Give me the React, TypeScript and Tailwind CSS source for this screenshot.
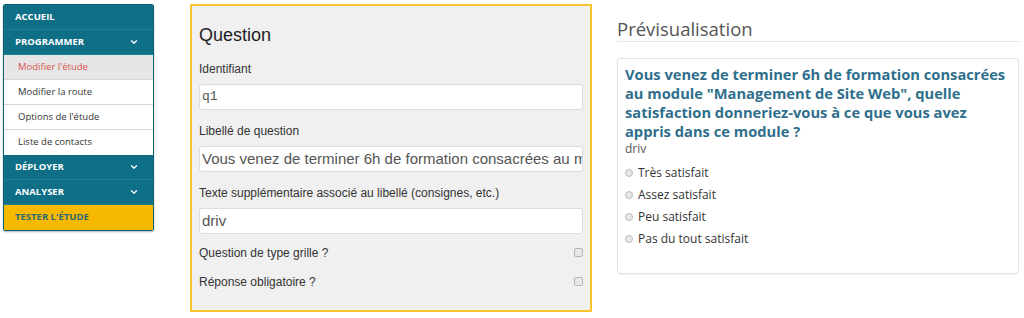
import { ChevronDown } from "lucide-react";

const menuHead = "flex items-center justify-between h-[25px] pl-[11px] pr-[14px] bg-[#0e6f87] text-white text-[9.5px] font-bold uppercase border-b border-[#1d7f96]";
const subItem = "flex items-center h-[25px] pl-[14px] text-[9.5px] text-[#333] bg-white border-b border-[#d6d6d6]";

function Sidebar() {
    return (
        <div className="w-[151px] mt-[4px] ml-[3px] border border-[#0c5f74] rounded-[2px] overflow-hidden shadow-[0_1px_2px_rgba(0,0,0,0.3)] self-start" style={{ fontFamily: '"Open Sans", sans-serif' }}>
            <div className={menuHead}>Accueil</div>
            <div className={menuHead}>
                Programmer
                <ChevronDown size={10} strokeWidth={3} />
            </div>
            <div className={`${subItem} !bg-[#e6e6e6] !text-[#d9534f]`}>Modifier l'étude</div>
            <div className={subItem}>Modifier la route</div>
            <div className={subItem}>Options de l'étude</div>
            <div className={`${subItem} border-b-0`}>Liste de contacts</div>
            <div className={menuHead}>
                Déployer
                <ChevronDown size={10} strokeWidth={3} />
            </div>
            <div className={menuHead}>
                Analyser
                <ChevronDown size={10} strokeWidth={3} />
            </div>
            <div className="flex items-center h-[25px] pl-[11px] bg-[#f7b900] text-[#2c6a70] text-[9.5px] font-bold uppercase">
                Tester l'étude
            </div>
        </div>
    );
}

function Field({ label, value, mono }: { label: string; value: string; mono?: boolean }) {
    return (
        <div className="mt-[13px]">
            <div className="text-[12px] text-[#333] leading-[16px]">{label}</div>
            <div
                className={`mt-[7px] h-[26px] bg-white border border-[#dcdcdc] rounded-[3px] flex items-center px-[2px] overflow-hidden whitespace-nowrap text-[#555] ${mono ? "text-[13px]" : "text-[15px]"}`}
                style={mono ? { fontFamily: '"Liberation Mono", monospace' } : undefined}
            >
                {value}
            </div>
        </div>
    );
}

function CheckRow({ label }: { label: string }) {
    return (
        <div className="flex items-center justify-between h-[29px] text-[12px] text-[#333]">
            <span>{label}</span>
            <span className="w-[9px] h-[9px] border border-[#b5b5b5] rounded-[2px] bg-[#e8e8e8]"></span>
        </div>
    );
}

function QuestionPanel() {
    return (
        <div className="w-[402px] h-[308px] mt-[4px] ml-[36px] border-2 border-[#f7c62f] bg-[#f0f0f0] px-[7px] pt-[16px]" style={{ fontFamily: '"Liberation Sans", Arial, sans-serif' }}>
            <h2 className="text-[18px] text-[#222] leading-[26px]">Question</h2>
            <Field label="Identifiant" value="q1" mono />
            <Field label="Libellé de question" value="Vous venez de terminer 6h de formation consacrées au module &quot;Management de Site Web&quot;" />
            <Field label="Texte supplémentaire associé au libellé (consignes, etc.)" value="driv" />
            <div className="mt-[4px]">
                <CheckRow label="Question de type grille ?" />
                <CheckRow label="Réponse obligatoire ?" />
            </div>
        </div>
    );
}

function Preview() {
    const options = ["Très satisfait", "Assez satisfait", "Peu satisfait", "Pas du tout satisfait"];
    return (
        <div className="w-[404px] ml-[25px] mt-[18px]" style={{ fontFamily: '"Open Sans", sans-serif' }}>
            <h2 className="text-[18.5px] text-[#555] leading-[22px] pb-[1px] border-b border-[#e8e8e8]">Prévisualisation</h2>
            <div className="mt-[16px] mr-[2px] h-[216px] border border-[#e3e3e3] rounded-[3px] shadow-[0_1px_1px_rgba(0,0,0,0.05)] px-[7px] pt-[6px]">
                <div className="text-[14.7px] font-bold text-[#2f6f8c] leading-[19px]">
                    Vous venez de terminer 6h de formation consacrées au module "Management de Site Web", quelle satisfaction donneriez-vous à ce que vous avez appris dans ce module ?
                </div>
                <div className="text-[12px] text-[#555] leading-[16px]">driv</div>
                <div className="mt-[5px]">
                    {options.map((o) => (
                        <div key={o} className="flex items-center h-[22px] text-[12px] text-[#333]">
                            <span className="w-[8px] h-[8px] rounded-full border border-[#bdbdbd] bg-[#e6e6e6] mr-[5px]"></span>
                            {o}
                        </div>
                    ))}
                </div>
            </div>
        </div>
    );
}

export default function App() {
    return (
        <main className="w-[1024px] h-[318px] bg-white flex items-start overflow-hidden">
            <Sidebar />
            <QuestionPanel />
            <Preview />
        </main>
    );
}
